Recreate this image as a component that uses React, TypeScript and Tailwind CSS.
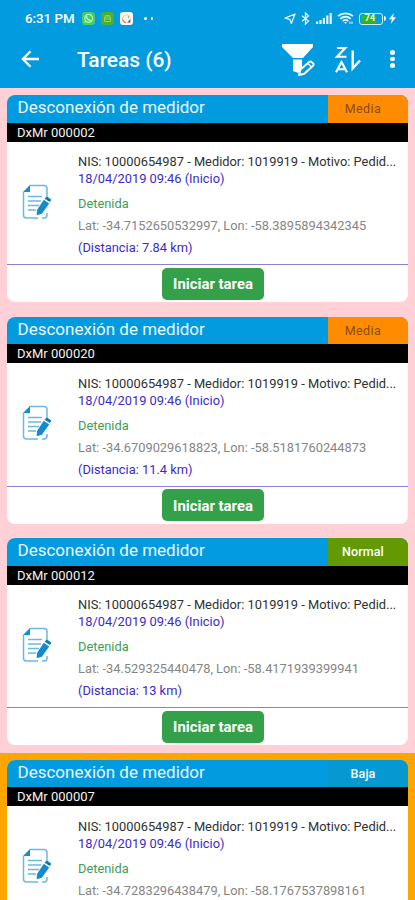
import clsx from "clsx";

type Priority = "Media" | "Normal" | "Baja";

type Task = {
    code: string;
    lat: string;
    lon: string;
    distance: string;
    priority: Priority;
    selected?: boolean;
}

const tasks: Task[] = [
    { code: "DxMr 000002", lat: "-34.7152650532997", lon: "-58.3895894342345", distance: "7.84 km", priority: "Media" },
    { code: "DxMr 000020", lat: "-34.6709029618823", lon: "-58.5181760244873", distance: "11.4 km", priority: "Media" },
    { code: "DxMr 000012", lat: "-34.529325440478", lon: "-58.4171939399941", distance: "13 km", priority: "Normal" },
    { code: "DxMr 000007", lat: "-34.7283296438479", lon: "-58.1767537898161", distance: "15.2 km", priority: "Baja", selected: true },
];

const priorityStyles: Record<Priority, string> = {
    Media: "bg-[#ff8c00] text-[#884b10] font-normal tracking-[0.400px]",
    Normal: "bg-[#639a03] text-white font-medium tracking-[0.100px]",
    Baja: "bg-[#0598d1] text-white font-medium tracking-[0.100px]",
};

const StatusBar = () => (
    <div className="flex h-[37px] items-center pl-[25px] pr-[19px] text-white">
        <span className="w-[51px] whitespace-nowrap text-[13.300px] font-medium leading-none">6:31 PM</span>
        <svg className="ml-[6px]" width="13" height="13" viewBox="0 0 13 13">
            <rect width="13" height="13" rx="3" fill="#43cf62" />
            <circle cx="6.700" cy="6.300" r="3.900" fill="none" stroke="#d5f8dd" strokeWidth="1.100" />
            <path d="M2.300 10.800l.8-2.600 1.700 1.800z" fill="#d5f8dd" />
            <path d="M4.600 4.300c.2 2.300 1.700 3.900 4 4.100" fill="none" stroke="#d5f8dd" strokeWidth="1.300" />
        </svg>
        <svg className="ml-[6px]" width="13" height="13" viewBox="0 0 13 13">
            <rect width="13" height="13" rx="3" fill="#4caf2e" />
            <path d="M3.500 5h6v4.500h-6zM4.500 5V3.500h4V5M4 7h5" fill="none" stroke="#93d35c" strokeWidth="1" />
        </svg>
        <svg className="ml-[6px]" width="13" height="13" viewBox="0 0 13 13">
            <rect width="13" height="13" rx="3" fill="#fbf8f8" />
            <path d="M9.500 4A4 4 0 0 0 2.700 6" fill="none" stroke="#d8c9c6" strokeWidth="1" />
            <path d="M2.600 6.500a4 4 0 0 0 3.500 4" fill="none" stroke="#f0883c" strokeWidth="1.300" />
            <path d="M10.300 6v4.500H6.500c2-.5 3.200-2 3.800-4.500z" fill="#4a3a8c" />
            <circle cx="8.500" cy="5" r=".900" fill="#e9955a" />
        </svg>
        <div className="ml-[11px] flex gap-[4px]">
            <span className="size-[2.500px] rounded-full bg-white" />
            <span className="size-[2.500px] rounded-full bg-white" />
        </div>
        <svg className="ml-auto" width="12" height="12" viewBox="0 0 12 12" fill="none" stroke="#e4f4fc" strokeWidth="1.300" strokeLinejoin="round">
            <path d="M11 1L7.300 10.500 5.800 6.300 1 5.200z" />
        </svg>
        <svg className="ml-[5px]" width="9" height="13" viewBox="0 0 9 13" fill="none" stroke="#e4f4fc" strokeWidth="1.300">
            <path d="M1 3.800l6.500 5.300L4.500 12V1l3 2.900L1 9.200" />
        </svg>
        <svg className="ml-[6px]" width="16" height="11" viewBox="0 0 16 11" fill="#e4f4fc">
            <path d="M0 8.500h2.200V11H0zM3.400 7h2.200v4H3.400zM6.800 5H9v6H6.800zM10.200 2.500h2.200V11h-2.200zM13.600 0h2.200v11h-2.200z" />
        </svg>
        <svg className="ml-[5px]" width="17" height="13" viewBox="0 0 17 13" fill="none" stroke="#e4f4fc" strokeWidth="1.800">
            <path d="M1 4.200c4.200-3.800 10.800-3.800 15 0M3.300 6.700c3-2.600 7.400-2.600 10.400 0M5.700 9c1.800-1.400 3.800-1.400 5.600 0" />
            <path d="M7 10h3l-1.500 2z" fill="#e4f4fc" stroke="none" />
            <path d="M13 9.500v2.500M15 9.500V12" strokeWidth="1" />
        </svg>
        <div className="ml-[5px] flex h-[12px] w-[24px] items-center rounded-[3px] border border-[#d6effa] p-px">
            <div className="flex h-full w-[15px] items-center justify-center rounded-[1px] bg-[#35b51f] pl-[3px] text-[9px] font-bold leading-none text-[#e3ffd9]">74</div>
        </div>
        <span className="ml-px h-[5px] w-[2px] rounded-r bg-[#d6effa]" />
        <svg className="ml-[3px]" width="7" height="11" viewBox="0 0 7 11" fill="#fff">
            <path d="M4.800 0L0 6.300h2.900L1.800 11 7 4.300H4z" />
        </svg>
    </div>
);

const Toolbar = () => (
    <div className="flex h-[50px] items-center pl-[21px] pr-[20.500px] pb-[7px] text-white">
        <svg className="mt-[1px]" width="19" height="18" viewBox="0 0 19 18" fill="none" stroke="#fff" strokeWidth="2.300">
            <path d="M18 9H2.500M9.500 1.200L1.800 9l7.700 7.800" />
        </svg>
        <h1 className="ml-[37px] whitespace-nowrap pt-[3px] text-[20.900px] font-medium leading-none">Tareas (6)</h1>
        <svg className="ml-auto mt-[2px]" width="33" height="34" viewBox="0 0 33 34">
            <path d="M0 1h31v3L21 15H11L0 4z" fill="#fff" />
            <path d="M11 16.500h9v9.800L16.500 30 11 28z" fill="#fff" />
            <path d="M17 32l1.500-5.500 9-7.700q1.300-.8 2.500.5l1.200 1.200q1 1.200-.2 2.300l-8.700 8z" fill="#039be0" stroke="#fff" strokeWidth="1.900" strokeLinejoin="round" />
            <path d="M26 20.500l3.600 3.600" stroke="#fff" strokeWidth="1.200" />
        </svg>
        <svg className="ml-[20px] mt-[1px]" width="26" height="27" viewBox="0 0 26 27" fill="none" stroke="#fff" strokeWidth="2.100">
            <path d="M2 2h8.300L2 10.700h9.500M1 26.200L6.500 16l5.500 10.200M3.300 23.200h6.500" />
            <path d="M17.700 4.500v18l7.300-8" strokeWidth="2.400" />
        </svg>
        <div className="ml-[29px] mt-[1px] flex flex-col gap-[2px]">
            <span className="size-[4.800px] rounded-full bg-white" />
            <span className="size-[4.800px] rounded-full bg-white" />
            <span className="size-[4.800px] rounded-full bg-white" />
        </div>
    </div>
);

const TaskIcon = () => (
    <svg width="30" height="36" viewBox="0 0 30 36">
        <path d="M7.500 1.500H22q3 0 3 3V14M25 29v2q0 3-3 3h-2M16 34H4.500q-3 0-3-3V8" fill="none" stroke="#6bb9e2" strokeWidth="1.500" />
        <path d="M8 1v7H1z" fill="#138fcf" />
        <path d="M6 12.500h14M6 17h13M6 21.500h11M6 26h8" stroke="#6bb9e2" strokeWidth="1.500" />
        <path d="M21.800 15.800l5.400 3.700-7.300 10.300-5.200 1.400.3-5.300z" fill="#128bce" />
        <path d="M22.600 14.700l1.300-1.500q.8-.8 1.700-.2l3 2.100q.8.700.2 1.600l-1 1.400z" fill="#0b7dbd" />
    </svg>
);

type Props = {
    task: Task;
}

const TaskCard = ({task}: Props) => {
    return (
        <li className={clsx("h-[221.500px] px-[7px] pt-[7px]", task.selected ? "bg-[#ffa500]" : "bg-[#ffd0d6]")}>
            <div className="flex h-[207px] flex-col overflow-hidden rounded-[8px] bg-white">
                <div className="flex h-[27.500px] shrink-0 bg-[#039be0]">
                    <h2 className="flex-1 whitespace-nowrap pl-[10.500px] pt-[1px] text-[17px] leading-[22px] text-[#e9f8ff]">
                        Desconexión de medidor
                    </h2>
                    <div className={clsx("w-[80px] pr-[10px] pt-[4px] text-center text-[12.500px] leading-[20px]", priorityStyles[task.priority])}>
                        {task.priority}
                    </div>
                </div>
                <div className="h-[19px] shrink-0 bg-black pl-[10px] text-[13px] leading-[19px] text-[#f4f4f4]">
                    {task.code}
                </div>
                <div className="flex h-[123.500px] shrink-0 border-b-[1.500px] border-[#8781d8]">
                    <div className="w-[71px] shrink-0 pl-[15px] pt-[42px]">
                        <TaskIcon />
                    </div>
                    <div className="flex flex-col whitespace-nowrap pt-[11.500px] text-[12.850px] leading-[17px]">
                        <span className="text-[#303030]">NIS: 10000654987 - Medidor: 1019919 - Motivo: Pedid...</span>
                        <span className="text-[#3a2bc8]">18/04/2019 09:46 (Inicio)</span>
                        <span className="mt-[8px] text-[#3f9b55]">Detenida</span>
                        <span className="mt-[5px] text-[#858585]">Lat: {task.lat}, Lon: {task.lon}</span>
                        <span className="mt-[5px] text-[#3a2bc8]">(Distancia: {task.distance})</span>
                    </div>
                </div>
                <div className="flex justify-center pl-[11px] pt-[2.500px]">
                    <button className="h-[32px] w-[102px] rounded-[5px] bg-[#35a04a] pt-[2px] text-[14.900px] font-bold leading-none text-white">
                        Iniciar tarea
                    </button>
                </div>
            </div>
        </li>
    );
}

const App = () => {
    return (
        <main className="h-[900px] w-[415px] overflow-hidden bg-[#ffd0d6] font-[Roboto,sans-serif]">
            <header className="h-[88px] bg-[#039be0]">
                <StatusBar />
                <Toolbar />
            </header>
            <ul>
                {tasks.map((task) => (
                    <TaskCard key={task.code} task={task} />
                ))}
            </ul>
        </main>
    );
}

export default App;
